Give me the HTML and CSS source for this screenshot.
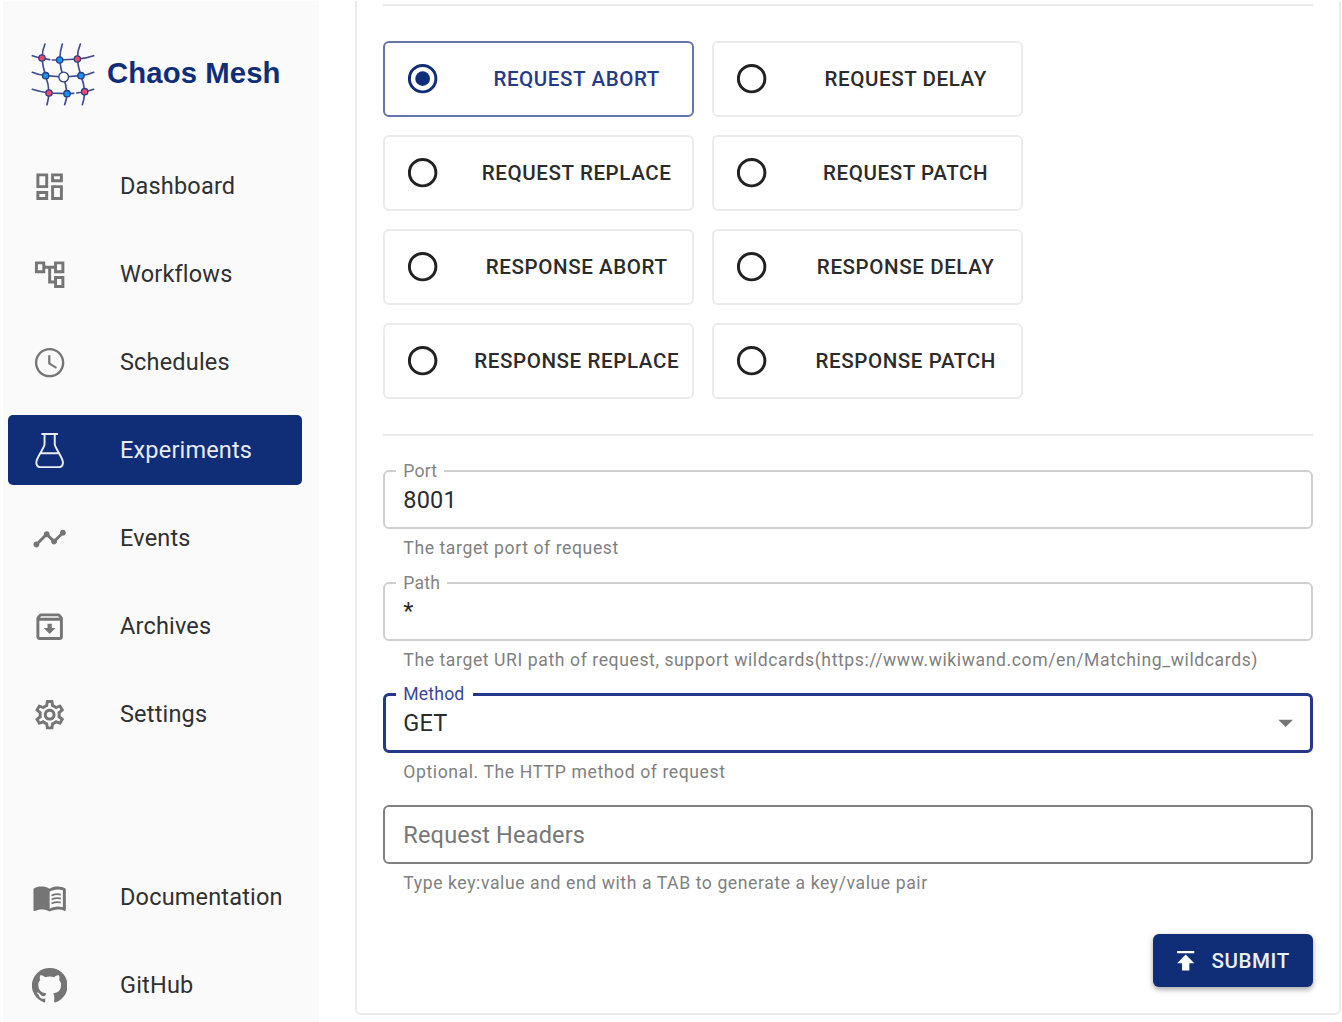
FILE: index.html
```html
<!DOCTYPE html>
<html lang="en">
<head>
<meta charset="utf-8">
<title>Chaos Mesh</title>
<link rel="stylesheet" href="styles.css">
</head>
<body>
<div class="app">
  <aside class="sidebar">
    <div class="brand">
      <svg class="brand-mark" viewBox="0 0 240 240">
        <g class="mesh">
          <path d="M60 27Q52 45 51 69Q53 96 62 122Q71 148 72 174Q70 195 66 209"/>
          <path d="M112 27Q105 48 104 75Q107 102 115 126Q124 150 126 176Q125 194 119 209"/>
          <path d="M166 27Q157 48 157 72Q159 96 168 122Q177 146 179 170Q178 192 172 209"/>
          <path d="M22 62Q36 67 51 69L74 74M82 75L104 75L157 72Q184 70 206 62"/>
          <path d="M22 112Q40 120 62 122L115 126L168 122Q189 120 206 112"/>
          <path d="M22 163Q46 171 72 174L126 176L146 175M155 174Q184 172 206 163"/>
        </g>
        <g class="node-red"><circle cx="51" cy="69" r="9.500"/><circle cx="157" cy="72" r="9.500"/><circle cx="72" cy="174" r="9.500"/><circle cx="179" cy="170" r="9.500"/></g>
        <g class="node-blue"><circle cx="104" cy="75" r="9.500"/><circle cx="62" cy="122" r="9.500"/><circle cx="168" cy="122" r="9.500"/><circle cx="126" cy="176" r="9.500"/></g>
        <circle class="node-hub" cx="116" cy="126" r="14.500"/>
      </svg>
      <span class="brand-name">Chaos Mesh</span>
    </div>
    <nav class="nav">
      <a class="nav-item"><svg class="icon" viewBox="0 0 24 24"><path d="M19 5v2h-4V5h4M9 5v6H5V5h4m10 8v6h-4v-6h4M9 17v2H5v-2h4M21 3h-8v6h8V3zM11 3H3v10h8V3zm10 8h-8v10h8V11zm-10 4H3v6h8v-6z"/></svg><span>Dashboard</span></a>
      <a class="nav-item"><svg class="icon" viewBox="0 0 24 24"><path d="M22 11V3h-7v3H9V3H2v8h7V8h2v10h4v3h7v-8h-7v3h-2V8h2v3h7zM7 9H4V5h3v4zm10 6h3v4h-3v-4zm0-10h3v4h-3V5z"/></svg><span>Workflows</span></a>
      <a class="nav-item"><svg class="icon" viewBox="0 0 24 24"><path d="M11.990 2C6.470 2 2 6.480 2 12s4.470 10 9.990 10C17.520 22 22 17.520 22 12S17.520 2 11.990 2zM12 20.400c-4.640 0-8.400-3.760-8.400-8.400s3.760-8.400 8.400-8.400 8.400 3.760 8.400 8.400-3.760 8.400-8.400 8.400zm.5-13.400H11v6l5.250 3.150.75-1.230-4.500-2.670z"/></svg><span>Schedules</span></a>
      <a class="nav-item active"><svg class="icon flask" viewBox="0 0 36 36"><path d="M10.300 1h15.400M12.800 1v10.500c0 3-7.500 13-8.200 17.300-.7 3.700 1 6.200 4.400 6.200h18c3.400 0 5.100-2.500 4.400-6.200-.7-4.300-8.200-14.300-8.200-17.300V1M9.300 20.600h17.400"/></svg><span>Experiments</span></a>
      <a class="nav-item"><svg class="icon" viewBox="0 0 24 24"><path d="M23 8c0 1.100-.9 2-2 2-.18 0-.35-.02-.51-.07l-3.560 3.550c.05.16.07.34.07.52 0 1.100-.9 2-2 2s-2-.9-2-2c0-.18.02-.36.07-.52l-2.550-2.550c-.16.05-.34.07-.52.07s-.36-.02-.52-.07l-4.550 4.560c.05.16.07.33.07.51 0 1.100-.9 2-2 2s-2-.9-2-2 .9-2 2-2c.18 0 .35.02.51.07l4.560-4.550C8.020 9.360 8 9.180 8 9c0-1.100.9-2 2-2s2 .9 2 2c0 .18-.02.36-.07.52l2.550 2.550c.16-.05.34-.07.52-.07s.36.02.52.07l3.550-3.560C19.020 8.350 19 8.180 19 8c0-1.100.9-2 2-2s2 .9 2 2z"/></svg><span>Events</span></a>
      <a class="nav-item"><svg class="icon" viewBox="0 0 24 24"><path d="M20.540 5.230l-1.390-1.680C18.880 3.210 18.470 3 18 3H6c-.47 0-.88.21-1.160.55L3.460 5.230C3.170 5.570 3 6.020 3 6.500V19c0 1.100.9 2 2 2h14c1.100 0 2-.9 2-2V6.500c0-.48-.17-.93-.46-1.270zM6.240 5h11.520l.83 1H5.420l.82-1zM5 19V8h14v11H5zm8.450-9h-2.900v3H8l4 4 4-4h-2.550z"/></svg><span>Archives</span></a>
      <a class="nav-item"><svg class="icon" viewBox="0 0 24 24"><path d="M19.430 12.980c.04-.32.07-.64.07-.98 0-.34-.03-.66-.07-.98l2.110-1.650c.19-.15.24-.42.12-.64l-2-3.460c-.09-.16-.26-.25-.44-.25-.06 0-.12.01-.17.03l-2.490 1c-.52-.4-1.080-.73-1.690-.98l-.38-2.650C14.460 2.180 14.250 2 14 2h-4c-.25 0-.46.18-.49.42l-.38 2.650c-.61.25-1.170.59-1.690.98l-2.490-1c-.06-.02-.12-.03-.18-.03-.17 0-.34.09-.43.25l-2 3.460c-.13.22-.07.49.12.64l2.110 1.650c-.04.32-.07.65-.07.98 0 .33.03.66.07.98l-2.110 1.650c-.19.15-.24.42-.12.64l2 3.460c.09.16.26.25.44.25.06 0 .12-.01.17-.03l2.490-1c.52.4 1.080.73 1.690.98l.38 2.650c.03.24.24.42.49.42h4c.25 0 .46-.18.49-.42l.38-2.650c.61-.25 1.170-.59 1.690-.98l2.490 1c.06.02.12.03.18.03.17 0 .34-.09.43-.25l2-3.460c.12-.22.07-.49-.12-.64l-2.110-1.650zm-1.980-1.710c.04.31.05.52.05.73 0 .21-.02.43-.05.73l-.14 1.130.89.7 1.080.84-.7 1.210-1.270-.51-1.040-.42-.9.68c-.43.32-.84.56-1.250.73l-1.060.43-.16 1.130-.2 1.350h-1.400l-.19-1.350-.16-1.130-1.060-.43c-.43-.18-.83-.41-1.230-.71l-.91-.7-1.060.43-1.270.51-.7-1.210 1.080-.84.89-.7-.14-1.130c-.03-.31-.05-.54-.05-.74s.02-.43.05-.73l.14-1.130-.89-.7-1.080-.84.7-1.210 1.270.51 1.040.42.9-.68c.43-.32.84-.56 1.250-.73l1.060-.43.16-1.130.2-1.350h1.390l.19 1.350.16 1.130 1.060.43c.43.18.83.41 1.230.71l.91.7 1.060-.43 1.270-.51.7 1.210-1.070.85-.89.7.14 1.130zM12 8c-2.210 0-4 1.790-4 4s1.790 4 4 4 4-1.790 4-4-1.790-4-4-4zm0 6c-1.100 0-2-.9-2-2s.9-2 2-2 2 .9 2 2-.9 2-2 2z"/></svg><span>Settings</span></a>
    </nav>
    <nav class="nav nav-links">
      <a class="nav-item"><svg class="icon" viewBox="0 0 24 24"><path d="M21 5c-1.110-.35-2.330-.5-3.500-.5-1.950 0-4.050.4-5.500 1.500-1.450-1.100-3.550-1.500-5.500-1.500S2.450 4.900 1 6v14.650c0 .25.25.5.5.5.1 0 .15-.05.25-.05C3.100 20.450 5.050 20 6.500 20c1.950 0 4.050.4 5.500 1.500 1.350-.85 3.800-1.500 5.500-1.500 1.650 0 3.350.3 4.750 1.050.1.05.15.05.25.05.25 0 .5-.25.5-.5V6c-.6-.45-1.250-.75-2-1zm0 13.500c-1.100-.35-2.300-.5-3.500-.5-1.700 0-4.150.65-5.500 1.500V8c1.350-.85 3.800-1.500 5.500-1.500 1.200 0 2.400.15 3.500.5v11.500z"/><path class="text-lines" d="M13.300 10.600q3-1.400 6.300-.7M13.300 13.300q3-1.400 6.300-.7M13.300 16q3-1.400 6.300-.7"/></svg><span>Documentation</span></a>
      <a class="nav-item"><svg class="icon" viewBox="1 1.270 22 22"><path d="M12 1.270a11 11 0 00-3.480 21.460c.55.09.73-.28.73-.55v-1.840c-3.030.64-3.670-1.460-3.670-1.460-.55-1.290-1.280-1.650-1.280-1.650-.92-.65.1-.65.1-.65 1.100 0 1.730 1.100 1.730 1.100.92 1.650 2.570 1.200 3.210.92a2 2 0 01.64-1.470c-2.470-.27-5.040-1.190-5.040-5.500 0-1.100.46-2.100 1.200-2.840a3.760 3.760 0 010-2.930s.91-.28 3.110 1.100c1.800-.49 3.700-.49 5.500 0 2.100-1.380 3.020-1.100 3.020-1.100a3.760 3.760 0 01.1 2.930c.83.74 1.200 1.740 1.200 2.940 0 4.210-2.570 5.130-5.040 5.400.45.37.82.92.82 2.020v3.030c0 .27.1.64.73.55A11 11 0 0012 1.270"/></svg><span>GitHub</span></a>
    </nav>
  </aside>
  <main class="card">
    <hr class="divider">
    <div class="actions">
      <label class="action selected"><svg class="radio" viewBox="0 0 24 24"><circle class="ring" cx="12" cy="12" r="9"/><circle class="dot" cx="12" cy="12" r="5"/></svg><span>REQUEST ABORT</span></label>
      <label class="action"><svg class="radio" viewBox="0 0 24 24"><circle class="ring" cx="12" cy="12" r="9"/></svg><span>REQUEST DELAY</span></label>
      <label class="action"><svg class="radio" viewBox="0 0 24 24"><circle class="ring" cx="12" cy="12" r="9"/></svg><span>REQUEST REPLACE</span></label>
      <label class="action"><svg class="radio" viewBox="0 0 24 24"><circle class="ring" cx="12" cy="12" r="9"/></svg><span>REQUEST PATCH</span></label>
      <label class="action"><svg class="radio" viewBox="0 0 24 24"><circle class="ring" cx="12" cy="12" r="9"/></svg><span>RESPONSE ABORT</span></label>
      <label class="action"><svg class="radio" viewBox="0 0 24 24"><circle class="ring" cx="12" cy="12" r="9"/></svg><span>RESPONSE DELAY</span></label>
      <label class="action"><svg class="radio" viewBox="0 0 24 24"><circle class="ring" cx="12" cy="12" r="9"/></svg><span>RESPONSE REPLACE</span></label>
      <label class="action"><svg class="radio" viewBox="0 0 24 24"><circle class="ring" cx="12" cy="12" r="9"/></svg><span>RESPONSE PATCH</span></label>
    </div>
    <hr class="divider">
    <form class="form">
      <div class="field">
        <div class="control"><span class="label">Port</span><span class="value">8001</span></div>
        <p class="helper">The target port of request</p>
      </div>
      <div class="field">
        <div class="control"><span class="label">Path</span><span class="value">*</span></div>
        <p class="helper">The target URI path of request, support wildcards(https://www.wikiwand.com/en/Matching_wildcards)</p>
      </div>
      <div class="field">
        <div class="control focused"><span class="label">Method</span><span class="value">GET</span><svg class="icon caret" viewBox="0 0 24 24"><path d="M7 10l5 5 5-5z"/></svg></div>
        <p class="helper">Optional. The HTTP method of request</p>
      </div>
      <div class="field">
        <div class="control hovered"><span class="placeholder">Request Headers</span></div>
        <p class="helper">Type key:value and end with a TAB to generate a key/value pair</p>
      </div>
      <button class="submit" type="button"><svg class="submit-icon" viewBox="0 0 24 24"><path d="M5 4v2h14V4H5zm0 10h4v6h6v-6h4l-7-7-7 7z"/></svg><span>SUBMIT</span></button>
    </form>
  </main>
</div>
</body>
</html>
```
FILE: styles.css
```css
* { box-sizing: border-box; }
body { margin: 0; background: #fff; color: #2b2b2b; font-family: Roboto, sans-serif; }
.app { display: flex; height: 1022px; overflow: hidden; padding: 1px 0 0 3px; }

.sidebar { width: 316px; flex: none; background: #fafafa; padding: 0 17px 0 5px; }
.brand { display: flex; align-items: center; height: 114px; padding: 34px 0 0 17px; }
.brand-mark { width: 80px; height: 80px; flex: none; }
.brand-name { margin: 0 0 4px 2px; font: bold 29.300px/32px "Liberation Sans", sans-serif; letter-spacing: .1px; color: #102d77; white-space: nowrap; }
.mesh { fill: none; stroke: #3d4b8f; stroke-width: 5; stroke-linecap: round; }
.node-red, .node-blue, .node-hub { stroke: #2b3f82; stroke-width: 4; }
.node-red { fill: #fb4570; }
.node-blue { fill: #1595f5; }
.node-hub { fill: #fff; }

.nav { display: flex; flex-direction: column; gap: 18px; padding-top: 36px; }
.nav-links { padding-top: 113px; }
.nav-item { display: flex; align-items: center; height: 70px; padding-left: 24px; border-radius: 5px; font-size: 23.500px; letter-spacing: .18px; color: #303030; }
.nav-item span { margin: 0 0 1px 52.700px; line-height: 34px; }
.nav-item.active { background: #102d77; color: #e9ebf3; }
.icon { width: 35.300px; height: 35.300px; fill: #757575; flex: none; }
.nav-item .icon { margin-top: 1px; }
.icon.flask { fill: none; stroke: #e9ebf3; stroke-width: 2; stroke-linejoin: round; stroke-linecap: round; }
.text-lines { fill: none; stroke: #757575; stroke-width: 1.200; }

.card { width: 986px; height: 1014px; margin-left: 36px; flex: none; border: 2px solid #ebebeb; border-top: 0; border-radius: 0 0 6px 6px; padding: 3px 26px 0; }
.divider { height: 2px; margin: 0; border: 0; background: #ebebeb; }
.actions { display: grid; grid-template-columns: 311px 311px; grid-auto-rows: 76px; gap: 18px; padding: 35px 0; }
.action { display: flex; align-items: center; border: 2px solid #ebebeb; border-radius: 6px; padding-left: 19.500px; font-size: 20.560px; font-weight: 500; letter-spacing: .59px; color: #2b2b2b; white-space: nowrap; }
.action span { flex: 1; margin-left: 21.500px; text-align: center; }
.radio { width: 35.300px; height: 35.300px; flex: none; }
.ring { fill: none; stroke: #212121; stroke-width: 2; }
.dot { fill: #102d77; }
.selected { border-color: #6673ac; color: #26398a; }
.selected .ring { stroke: #102d77; }

.form { display: flex; flex-direction: column; padding-top: 34px; }
.field { height: 111.500px; }
.control { position: relative; display: flex; align-items: center; height: 59px; border: 2px solid #d0d0d0; border-radius: 6px; padding: 0 8px 0 18.300px; font-size: 23.500px; letter-spacing: .18px; }
.label { position: absolute; left: 11px; top: -12px; padding: 0 7.300px; background: #fff; font-size: 17.630px; line-height: 22px; letter-spacing: .17px; color: #838383; }
.value { flex: 1; }
.placeholder { padding-top: 2px; color: #777; }
.focused { height: 60px; border: 3px solid #24378a; padding: 0 7px 0 17.300px; }
.focused .label { left: 10px; top: -13px; padding-right: 9px; color: #3a4996; }
.hovered { border-color: #808080; }
.helper { margin: 5px 0 0 20.300px; font-size: 17.630px; line-height: 29px; letter-spacing: .58px; color: #7f7f7f; white-space: nowrap; }
.submit { display: flex; align-items: center; align-self: flex-end; width: 160px; height: 53px; margin-top: 18px; padding: 0 0 0 18px; border: 0; border-radius: 6px; background: #102d77; color: #edeff5; font: 500 20.560px Roboto, sans-serif; letter-spacing: .59px; box-shadow: 0 3px 5px rgba(0,0,0,.25), 0 1px 6px rgba(0,0,0,.12); }
.submit-icon { width: 29.400px; height: 29.400px; margin-right: 11px; fill: #fff; }
```
